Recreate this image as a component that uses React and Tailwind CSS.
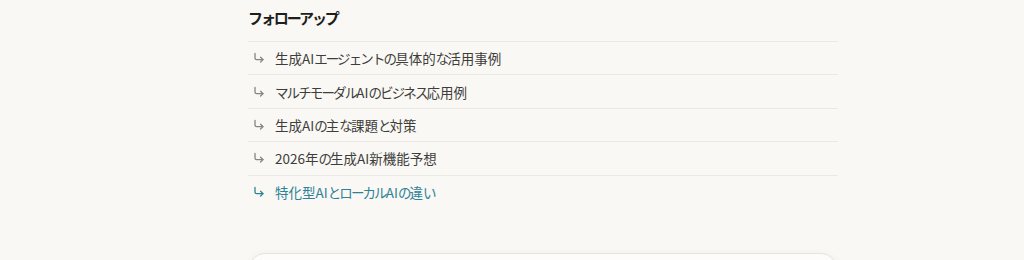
const followUps = [
  "生成AIエージェントの具体的な活用事例",
  "マルチモーダルAIのビジネス応用例",
  "生成AIの主な課題と対策",
  "2026年の生成AI新機能予想",
  "特化型AIとローカルAIの違い",
];

// kana in the original UI font is set proportionally (narrow), so tighten kana runs a bit
const JpText = ({ text }) =>
  text.split(/([\u3040-\u30ff]+)/).map((part, i) =>
    /[\u3040-\u30ff]/.test(part) ? (
      <span key={i} className="tracking-[-0.14em]">
        {part}
      </span>
    ) : (
      <span key={i}>{part}</span>
    )
  );

const ArrowIcon = ({ className }) => (
  <svg
    width="12"
    height="12"
    viewBox="0 0 12 12"
    fill="none"
    stroke="currentColor"
    strokeWidth="1.3"
    strokeLinecap="round"
    strokeLinejoin="round"
    className={className}
  >
    <path d="M2 1.5v4.5c0 1 .6 1.6 1.6 1.6H10" />
    <path d="M7.6 5.2 10 7.6 7.6 10" />
  </svg>
);

const App = () => {
  return (
    <div className="min-h-[260px] w-full overflow-hidden bg-[#f9f8f5] font-['Noto_Sans_CJK_JP','Noto_Sans',sans-serif] text-[#3d3d3a]">
      <div className="ml-[248px] w-[590px] pt-[6px]">
        {/* Heading */}
        <h2 className="h-[24px] text-[15px] font-bold leading-[24px] text-[#1f1e1b]">
          <JpText text="フォローアップ" />
        </h2>

        {/* Follow-up list */}
        <ul className="mt-[11px]">
          {followUps.map((item, i) => {
            const isLast = i === followUps.length - 1;
            return (
              <li
                key={item}
                className={`flex h-[33.4px] items-center gap-[10px] border-t border-[#ebe9e3] pl-[5px] text-[13.5px] ${
                  isLast ? "text-[#2e8296]" : "text-[#3d3d3a]"
                }`}
              >
                <ArrowIcon className={isLast ? "text-[#2e8296]" : "text-[#86847e]"} />
                <span className="leading-[20px]">
                  <JpText text={item} />
                </span>
              </li>
            );
          })}
        </ul>
      </div>

      {/* Composer card peeking at bottom */}
      <div className="ml-[249px] mt-[45px] h-[40px] w-[588px] rounded-2xl border border-[#e6e4de] bg-[#fdfcfa] shadow-[0_2px_8px_rgba(0,0,0,0.06)]" />
    </div>
  );
};

export default App;
